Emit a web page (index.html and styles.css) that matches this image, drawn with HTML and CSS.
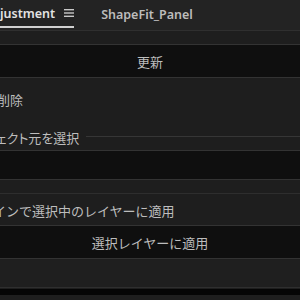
FILE: index.html
```html
<!DOCTYPE html>
<html lang="ja">

<head>
    <meta charset="UTF-8">
    <meta name="viewport" content="width=device-width, initial-scale=1.0">
    <title>ShapeFit_Panel</title>
    <link rel="stylesheet" href="styles.css">
</head>

<body>
    <div class="tabs">
        <div class="tab active">
            <span class="tab-name">justment</span>
            <svg class="menu" width="10" height="8" viewBox="0 0 10 8">
                <rect x="0" y="0" width="10" height="1.4" fill="#c8c8c8" />
                <rect x="0" y="3.3" width="10" height="1.4" fill="#c8c8c8" />
                <rect x="0" y="6.6" width="10" height="1.4" fill="#c8c8c8" />
            </svg>
        </div>
        <div class="tab">
            <span class="tab-name">ShapeFit_Panel</span>
        </div>
    </div>

    <div class="panel">
        <button class="btn refresh">更新</button>

        <div class="row delete">削除</div>

        <div class="legend">
            <span class="legend-text">ェクト元を選択</span>
            <span class="legend-line"></span>
        </div>
        <div class="field"></div>

        <div class="rule"></div>
        <div class="row apply-label">インで選択中のレイヤーに適用</div>
        <button class="btn apply">選択レイヤーに適用</button>

        <div class="footer"></div>
        <div class="scrollbar"></div>
    </div>
</body>

</html>
```

FILE: styles.css
```css
body {
    margin: 0;
    height: 100vh;
    background-color: #1e1e1e;
    color: #bdbdbd;
    font-family: "Noto Sans CJK JP", "Noto Sans", sans-serif;
    font-size: 13px;
    overflow: hidden;
}

/* Tab strip */
.tabs {
    height: 30px;
    display: flex;
    gap: 27px;
    background: #232323;
    border-bottom: 1px solid #2f2f2f;
}

.tab {
    height: 28px;
    display: flex;
    align-items: center;
    gap: 9px;
    font-family: "Noto Sans", sans-serif;
    font-size: 12.5px;
    font-weight: 600;
    color: #bcbcbc;
}

.tab.active {
    color: #e2e2e2;
    border-bottom: 2px solid #d0d0d0;
    align-self: flex-start;
    height: 26px;
}

.tab.active .tab-name {
    margin-top: 1px;
}

.menu {
    display: block;
}

/* Panel body */
.panel {
    display: flex;
    flex-direction: column;
    padding-top: 13px;
}

.btn {
    height: 34px;
    border: none;
    border-top: 1px solid #333;
    border-bottom: 1px solid #333;
    background: #0f0f0f;
    color: #bdbdbd;
    font-family: inherit;
    font-size: 13px;
    padding: 0;
}

.row {
    height: 20px;
    line-height: 20px;
    white-space: nowrap;
}

.delete {
    margin-top: 12px;
    margin-left: -3px;
}

.legend {
    display: flex;
    align-items: center;
    gap: 7px;
    margin-top: 17px;
    height: 20px;
    margin-left: -4px;
    font-feature-settings: "palt";
}

.legend-text {
    white-space: nowrap;
}

.legend-line {
    flex: 1;
    height: 1px;
    background: #363636;
    margin-top: -2px;
}

.field {
    height: 28px;
    margin-top: 3px;
    border-top: 1px solid #333;
    border-bottom: 1px solid #333;
    background: #0f0f0f;
}

.rule {
    height: 1px;
    background: #2e2e2e;
    margin-top: 13px;
}

.apply-label {
    margin-top: 7px;
    margin-left: -7px;
}

.apply {
    margin-top: 4px;
}

.footer {
    height: 28px;
    background: #1f1f1f;
    border-bottom: 1px solid #2f2f2f;
}

.scrollbar {
    height: 6px;
    margin-top: 1px;
    background: #050505;
}
```
